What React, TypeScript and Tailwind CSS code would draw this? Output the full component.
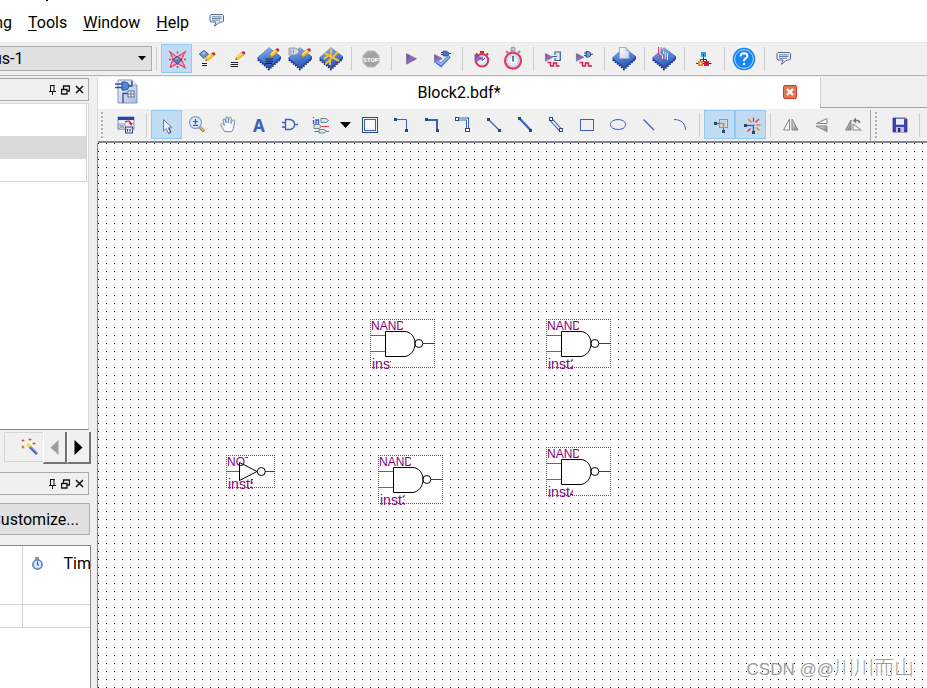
import type { ReactNode } from "react";

const NAVY = "#2f4a66";
const BLUE = "#3a5fc4";

function Icon({ children, shift = 0 }: { children: ReactNode; shift?: number }) {
  return (
    <svg width="25" height="25" viewBox={`0 ${-shift} 25 25`} className="shrink-0 overflow-visible" aria-hidden="true">
      {children}
    </svg>
  );
}

function Tool({ label, active, top, children }: { label: string; active?: boolean; top?: boolean; children: ReactNode }) {
  return (
    <button
      type="button"
      aria-label={label}
      title={label}
      className={`flex h-[29px] w-[31px] shrink-0 items-center justify-center border ${
        active ? "border-[#90c8f6] bg-[#c0dcf3]" : "border-transparent"
      }`}
    >
      <Icon shift={top ? 1 : 0}>{children}</Icon>
    </button>
  );
}

function Sep() {
  return (
    <div className="mt-[3px] flex h-6 w-[9px] shrink-0 justify-center">
      <div className="w-px bg-[#cdcdcd]" />
    </div>
  );
}

function Grip({ className }: { className: string }) {
  return (
    <svg width="3" height="27" className={`mt-px shrink-0 ${className}`} aria-hidden="true">
      {[0, 4, 8, 12, 16, 20, 24].map((y) => (
        <rect key={y} x="0" y={y + 1} width="2" height="2" fill="#b4b4b4" />
      ))}
    </svg>
  );
}

function Defs() {
  return (
    <svg width="0" height="0" className="absolute" aria-hidden="true">
      <defs>
        <linearGradient id="chip" x1="0" y1="0" x2="0.3" y2="1">
          <stop offset="0" stopColor="#9dbdee" />
          <stop offset="0.5" stopColor="#5b87d8" />
          <stop offset="1" stopColor="#2f5dbb" />
        </linearGradient>
        <linearGradient id="play" x1="0" y1="0" x2="1" y2="1">
          <stop offset="0" stopColor="#52538f" />
          <stop offset="0.5" stopColor="#a766c0" />
          <stop offset="1" stopColor="#5a2a84" />
        </linearGradient>
        <linearGradient id="page" x1="0" y1="0" x2="1" y2="1">
          <stop offset="0" stopColor="#ffffff" />
          <stop offset="1" stopColor="#c3d0ee" />
        </linearGradient>
        <linearGradient id="docFill" x1="0" y1="0" x2="1" y2="1">
          <stop offset="0" stopColor="#f4f7fd" />
          <stop offset="1" stopColor="#a9b9e3" />
        </linearGradient>
        <linearGradient id="grayFill" x1="0" y1="0" x2="1" y2="1">
          <stop offset="0" stopColor="#f5f5f5" />
          <stop offset="1" stopColor="#777777" />
        </linearGradient>
        <radialGradient id="dial">
          <stop offset="0" stopColor="#ffffff" />
          <stop offset="1" stopColor="#c5d7f7" />
        </radialGradient>
      </defs>
    </svg>
  );
}

function Chip() {
  return (
    <g>
      <path d="M1 12.8 L12 22.3 L23.5 12" fill="none" stroke="#1d2f5c" strokeWidth="2" strokeDasharray="1.5 1.2" />
      <path d="M0.5 10.5 L12 0.5 L24 9.5 V12 L12 22 L0.5 12.5 Z" fill="#2949a0" />
      <path d="M0.5 10.5 L12 0.5 L24 9.5 L12 20 Z" fill="url(#chip)" />
    </g>
  );
}

function Pencil({ x, y }: { x: number; y: number }) {
  return (
    <g transform={`translate(${x} ${y})`}>
      <path d="M0 8 L1 5 L6 0.5 L8.5 3 L3 7.3 Z" fill="#f6c72b" stroke="#e8a91c" strokeWidth="0.9" />
      <path d="M1.5 5.3 L6.3 1.3" stroke="#fff08a" strokeWidth="1" />
      <path d="M0 8 L0.6 6.5 L1.7 7.4 Z" fill="#3a3226" />
      <path d="M6 0.5 L7.5 -0.6 Q10.3 -0.4 9.7 2 L8.5 3 Z" fill="#c91e4a" />
    </g>
  );
}

function Play({ x, y, s = 1 }: { x: number; y: number; s?: number }) {
  return <path transform={`translate(${x} ${y}) scale(${s})`} d="M0.5 0.5 L10.5 5.5 L0.5 11 Z" fill="url(#play)" stroke="#55608a" strokeWidth="0.6" />;
}

function Bubble() {
  return (
    <g>
      <path d="M6 5.5 H17.5 L18.5 6.5 V12 L17.5 13 H15 L9.5 17.3 L11 13 H6 L5 12 V6.5 Z" fill="#e3edf8" stroke="#526d8f" strokeWidth="1" />
      <path d="M7 7.8 H16.5 M7 9.5 H16.5 M7 11.2 H15" stroke="#526d8f" strokeWidth="0.8" />
    </g>
  );
}

function Node({ x, y }: { x: number; y: number }) {
  return <rect x={x - 1.5} y={y - 1.5} width="3" height="3" fill={NAVY} />;
}

function MainToolbar() {
  return (
    <div className="flex h-[34px] shrink-0 items-start overflow-hidden border-t border-b border-t-[#e9e9e9] border-b-[#b4b4b4] bg-[#f0f0f0] pt-px">
      <div className="relative mt-[2px] h-[25px] w-[152px] shrink-0">
        <select
          aria-label="Revision"
          className="h-[25px] w-full appearance-none border border-l-0 border-[#adadad] bg-[#e1e1e1] indent-[-7px] font-[Roboto,sans-serif] text-base leading-none text-black"
        >
          <option>us-1</option>
        </select>
        <svg width="9" height="5" className="pointer-events-none absolute top-[10px] right-[5px]" aria-hidden="true">
          <path d="M0 0 H8 L4 4.5 Z" fill="#000" />
        </svg>
      </div>
      <Sep />
      <Tool label="Project navigator" active top>
        <path d="M6 5 L13 10 L21 5 L17.5 12.5 L21 20.5 L13.5 16.5 L6 20.5 L9 12.5 Z" fill="#f7a8c0" stroke="#ec3468" strokeWidth="1.3" strokeDasharray="3 0.5" />
        <path d="M13.5 4.5 V6.5 M13.5 19 V21 M5 12.5 H7 M20 12.5 H22" stroke="#d93364" strokeWidth="1.5" />
        <path d="M8.5 12.8 L13 9.5 L18 12.8 L13.3 17.3 Z" fill="#597dae" stroke="#2c3f66" strokeWidth="0.8" />
        <path d="M10.5 12.2 L13 10.5 L15.5 12.2 Z" fill="#adc6e6" />
      </Tool>
      <Tool label="Assignment editor" top>
        <path d="M4.3 7 L9 3.5 L13.5 7 L9 11.5 Z" fill="#6e96cb" stroke="#344b77" strokeWidth="0.9" />
        <path d="M6 7 L9 4.8 L11 6.2 Z" fill="#c5daf2" />
        <Pencil x={10.5} y={5.8} />
        <path d="M7 16.5 H12 M7 18.5 H12" stroke="#222" strokeWidth="1" />
      </Tool>
      <Tool label="Settings" top>
        <Pencil x={9.5} y={4.8} />
        <path d="M5 15.5 H12 M4.5 17.5 H12 M4.5 19.5 H12" stroke="#222" strokeWidth="1.2" />
      </Tool>
      <Tool label="Pin planner" top>
        <Chip />
        <path d="M8.5 12 H16 M8.5 14.2 H16 M8.5 16.4 H15" stroke="#14254f" strokeWidth="1.1" />
        <Pencil x={12.5} y={1.8} />
      </Tool>
      <Tool label="Chip editor" top>
        <Chip />
        <path d="M1 1 H7 Q11 2 11 4.5 Q10.5 7.5 7 8 H1 Z" fill="#d4d9e2" stroke="#7c8796" strokeWidth="0.8" />
        <path d="M3 2.5 V6.5 M5.5 2.5 V6.5" stroke="#8c96a5" />
        <Pencil x={13} y={1.8} />
      </Tool>
      <Tool label="Floorplan" top>
        <Chip />
        <path d="M5.5 6 L20 14 M19 5 L6.5 17 M12 1.5 V9 M5 12 L10 8 M11 18 V12" fill="none" stroke="#f3bf3b" strokeWidth="2" />
      </Tool>
      <Sep />
      <Tool label="Stop" top>
        <path d="M8.5 4 H15.5 L20 8.5 V15.5 L15.5 20 H8.5 L4 15.5 V8.5 Z" fill="#a3a3a3" stroke="#bdbdbd" strokeWidth="1" />
        <text x="12" y="14.5" textAnchor="middle" fill="#fff" className="font-[Roboto,sans-serif] text-[6px] font-bold">STOP</text>
      </Tool>
      <Sep />
      <Tool label="Start compilation" top>
        <Play x={7} y={6.2} />
      </Tool>
      <Tool label="Start analysis" top>
        <Play x={4} y={7} s={0.8} />
        <path d="M6.5 14.5 L11 18 L19.5 9" fill="none" stroke="#3f6fc8" strokeWidth="3.6" />
        <path d="M6.7 14.3 L11 17.5 L19 9.3" fill="none" stroke="#85b8f4" strokeWidth="1.9" />
        <path d="M13 4 H16 Q19 5 19.5 6.5 Q19 8.5 16 9 H13 Z" fill="#5272b8" stroke="#304778" strokeWidth="0.7" />
        <path d="M11 5.5 H13 M11 7.5 H13 M19 6.5 H21" stroke="#304778" />
      </Tool>
      <Sep />
      <Tool label="Timing analyzer" top>
        <rect x="10" y="4" width="4" height="2.5" fill="#b82649" />
        <path d="M6 6.5 L7.5 8 M18 6.5 L16.5 8" stroke="#b82649" strokeWidth="2" />
        <circle cx="12" cy="13.3" r="6.2" fill="url(#dial)" stroke="#df3159" strokeWidth="2" />
        <path d="M12 13.5 V9.5 M12 13.5 L15 11" stroke="#34406d" />
        <Play x={4.5} y={7} s={0.75} />
      </Tool>
      <Tool label="Stopwatch" top>
        <path d="M10 1 Q12 -1 14 1 V4 H10 Z" fill="#c5c5c5" stroke="#888" strokeWidth="0.8" />
        <path d="M5 4 L7 6 M19 4 L17 6" stroke="#999" strokeWidth="2.4" />
        <circle cx="12" cy="13.7" r="8" fill="url(#dial)" stroke="#e13b60" strokeWidth="2.2" />
        <circle cx="12" cy="13.7" r="5.5" fill="none" stroke="#8fa6d4" strokeWidth="1" strokeDasharray="0.8 2" />
        <path d="M12 9 V14.5" stroke="#25335e" strokeWidth="1.3" />
      </Tool>
      <Sep />
      <Tool label="RTL simulation" top>
        <Play x={4} y={6} s={0.75} />
        <path d="M14.5 5.5 H19 V13.5 H14.5 Z" fill="#dbe8f4" />
        <path d="M11.5 9.5 H16 M14 8 V5 H19.3 V13.5 H14 V11" fill="none" stroke="#3d5f82" strokeWidth="1.2" />
        <path d="M6.5 15.5 H9.5 V19 H12.5 V16 H15.5 V19 H18.5" fill="none" stroke="#cc204c" strokeWidth="1.5" />
      </Tool>
      <Tool label="Gate level simulation" top>
        <Play x={4} y={6} s={0.75} />
        <path d="M14 4.5 H16.5 Q19 5.5 19 7.3 Q18.5 9.7 16.5 10 H14 Z" fill="#6e95da" stroke="#2f4f91" />
        <path d="M12 6 H14 M12 8.5 H14 M19 7.3 H21" stroke="#2f4f91" />
        <path d="M7.5 15.5 H10.5 V19 H13.5 V16 H16.5 V19 H20" fill="none" stroke="#cc204c" strokeWidth="1.5" />
      </Tool>
      <Sep />
      <Tool label="Chip document" top>
        <Chip />
        <path d="M7.5 0.5 H14 L17 3.5 V11.5 H7.5 Z" fill="url(#page)" stroke="#8ea4cc" strokeWidth="0.8" />
        <path d="M14 0.5 V3.5 H17" fill="none" stroke="#8ea4cc" strokeWidth="0.8" />
      </Tool>
      <Sep />
      <Tool label="Programmer" top>
        <Chip />
        <path d="M6.5 0 V7 L9 9 V12 M9 0 V6 L12 8 V13" fill="none" stroke="#d8405e" strokeWidth="1" />
        <path d="M7.8 0 V6.5 L10.5 8.5 V12 M11.5 4 V7 M13.3 5 V12 M15.5 6 V13" fill="none" stroke="#e3ebfa" strokeWidth="1" />
      </Tool>
      <Sep />
      <Tool label="Platform designer" top>
        <path d="M11.5 9 V15 M11.5 12.5 H8.5 V15 M11.5 12.5 H14.5 V15 M4 16.5 H19.5" fill="none" stroke="#333" strokeWidth="1" />
        <rect x="9" y="5" width="5" height="5" fill="#2aa0e8" />
        <rect x="11" y="7" width="1" height="2" fill="#15537f" />
        <rect x="6" y="14" width="5" height="5" fill="#f2812d" />
        <path d="M7.5 16.5 H9.5 M8.5 15.5 V17.5" stroke="#fff1c5" />
        <rect x="12" y="14" width="5" height="5" fill="#e3173d" />
        <path d="M14.5 15.2 V16.8" stroke="#860a22" />
      </Tool>
      <Sep />
      <Tool label="Help" top>
        <circle cx="12" cy="12" r="11.3" fill="#1685f5" />
        <circle cx="12" cy="12" r="9.3" fill="none" stroke="#b9dafb" strokeWidth="1" />
        <path d="M8.5 9.5 Q8.7 6.2 12 6.2 Q15.5 6.4 15.4 9 Q15.3 10.8 13.4 11.6 Q12 12.3 12 14.2" fill="none" stroke="#fff" strokeWidth="2" />
        <circle cx="12" cy="17" r="1.3" fill="#fff" />
      </Tool>
      <Sep />
      <Tool label="Feedback" top>
        <Bubble />
      </Tool>
    </div>
  );
}

function DrawToolbar() {
  return (
    <div className="flex h-[34px] shrink-0 items-start overflow-hidden border-b-2 border-[#84868c] bg-[#f0f0f0] pt-px">
      <Grip className="mr-[7px] ml-[3px]" />
      <Tool label="Detach window">
        <rect x="4" y="5" width="16" height="12" fill="#e8edf8" stroke="#2d4ea6" strokeWidth="0.6" />
        <rect x="4" y="5" width="16" height="3" fill="#2447a6" />
        <path d="M11 10 Q16 7.5 17 12" fill="none" stroke="#d81e48" strokeWidth="1.4" />
        <path d="M14.8 11 H19.2 L17 13.8 Z" fill="#d81e48" />
        <rect x="5" y="12" width="6" height="5" fill="#fff" stroke="#7883a0" strokeWidth="0.8" />
        <path d="M7 13 V16 M9 13 V16" stroke="#555" />
        <rect x="11.5" y="15" width="7" height="6" fill="#dbe5f8" stroke="#374979" strokeWidth="1" />
        <path d="M13.5 17 V19.5 M16 17 V19.5" stroke="#26355e" />
      </Tool>
      <Sep />
      <Tool label="Selection tool" active>
        <path d="M9.5 7.5 V19 L12.3 16.6 L14.2 21 L16.4 20 L14.4 15.8 H18 Z" fill="#eef3ff" stroke="#6e7c9d" strokeWidth="1" />
        <path d="M15 16 L17 20.3 L14.5 21.8" fill="none" stroke="#3f4f7c" />
      </Tool>
      <Tool label="Zoom tool">
        <path d="M14.5 14.8 L19 19.5" stroke="#9a7448" strokeWidth="3" />
        <path d="M14.8 14.8 L18.6 18.8" stroke="#e9bd83" strokeWidth="1.3" />
        <circle cx="10.5" cy="10.5" r="5.9" fill="#dcebfc" stroke="#86a3cd" strokeWidth="1.3" />
        <path d="M10.5 7 V12 M8 9.5 H13 M8 13.3 H13" stroke="#2c5cc0" strokeWidth="1.2" />
      </Tool>
      <Tool label="Hand tool">
        <path d="M8.5 19.5 C7.5 17 5 14.5 4.7 12.5 C5.5 11 7.5 12 8.5 13.5 L7 8 C7 6.2 9 6.3 9.3 8 L10 11 L10 6 C10 4.4 12.3 4.3 12.3 6 V11 L13.2 6.2 C13.6 4.7 15.7 5.2 15.4 6.9 L15 11.5 L16.6 8.5 C17.5 7.4 19.2 8 18.7 9.7 L17.6 15 C17.2 17.5 16.5 18.4 15.7 19.7 Z" fill="#f7f9ff" stroke="#6f86b3" strokeWidth="1" />
      </Tool>
      <Tool label="Text tool">
        <text x="12" y="20" textAnchor="middle" fill={BLUE} className="font-['Noto_Sans',sans-serif] text-[17px] font-bold">A</text>
      </Tool>
      <Tool label="Symbol tool">
        <path d="M7.5 7.5 H12 C15 8 16.5 10 16.5 12.5 C16.5 15 15 17 12 17.5 H7.5 Z M4 10.5 H7.5 M4 15 H7.5 M16.5 12.5 H20" fill="none" stroke={BLUE} strokeWidth="1.3" />
      </Tool>
      <Tool label="Pin tool">
        <path d="M4.5 5 V6 M4.5 8 V12 M7 12 V8 H9.5 V12" fill="none" stroke={BLUE} strokeWidth="1.4" />
        <path d="M12 6.5 H17 L19.5 8.5 L17 10.5 H12 Z M5 12.5 H10 L12.5 14.5 L10 16.5 H5 Z M10 17.5 H15 L17.5 19.2 L15 21 H10 Z" fill="#dce7ec" stroke="#607882" strokeWidth="0.9" />
        <path d="M12.5 14.5 H20 M5.5 19.5 H10 M17.5 19.5 H20" stroke="#e63b47" strokeWidth="1.2" />
      </Tool>
      <button type="button" aria-label="Pin type" className="flex h-[29px] w-[17px] shrink-0 items-center justify-center">
        <svg width="11" height="6" aria-hidden="true"><path d="M0 0 H11 L5.5 6 Z" fill="#000" /></svg>
      </button>
      <Tool label="Block tool">
        <rect x="5.5" y="5.5" width="15" height="15" fill="none" stroke={NAVY} />
        <rect x="7.5" y="7.5" width="11" height="11" fill="#f7f9fd" stroke={BLUE} />
      </Tool>
      <Tool label="Orthogonal node">
        <path d="M7.5 7.5 H18.5 V18.5" fill="none" stroke={BLUE} /><Node x={7.5} y={7.5} /><Node x={18.5} y={18.5} />
      </Tool>
      <Tool label="Orthogonal bus">
        <path d="M7.5 8 H18 V18.5" fill="none" stroke={BLUE} strokeWidth="2" /><Node x={7.5} y={7.5} /><Node x={18.5} y={18.5} />
      </Tool>
      <Tool label="Orthogonal conduit">
        <path d="M7.5 7 H17.5 V18.5" fill="none" stroke={BLUE} strokeWidth="3" />
        <path d="M7.5 7 H17.5 V18.5" fill="none" stroke="#fff" strokeWidth="1" />
        <rect x="5.5" y="5.5" width="3" height="3" fill="#fff" stroke={NAVY} />
        <rect x="15.5" y="16.5" width="4" height="3" fill="#fff" stroke={NAVY} />
      </Tool>
      <Tool label="Diagonal node">
        <path d="M7.5 7.5 L18.5 18.5" stroke={BLUE} strokeWidth="1.2" /><Node x={7.5} y={7.5} /><Node x={18.5} y={18.5} />
      </Tool>
      <Tool label="Diagonal bus">
        <path d="M7.5 6.5 L18.5 18" stroke={BLUE} strokeWidth="2.2" /><Node x={7.5} y={6.5} /><Node x={18.5} y={18.5} />
      </Tool>
      <Tool label="Diagonal conduit">
        <path d="M8 7.5 L18 18.5" stroke={BLUE} strokeWidth="3.8" />
        <path d="M8 7.5 L18 18.5" stroke="#f5f8ff" strokeWidth="1.8" />
        <rect x="6.5" y="5.5" width="3" height="3" fill="#fff" stroke={NAVY} />
        <rect x="16.5" y="16.5" width="3" height="3" fill="#fff" stroke={NAVY} />
      </Tool>
      <Tool label="Rectangle tool">
        <rect x="6.5" y="7.5" width="13" height="11" fill="none" stroke={BLUE} />
      </Tool>
      <Tool label="Oval tool">
        <ellipse cx="13" cy="12.5" rx="7.7" ry="5" fill="none" stroke={BLUE} />
      </Tool>
      <Tool label="Line tool"><path d="M7.5 7.5 L18 18" stroke={BLUE} strokeWidth="1.3" /></Tool>
      <Tool label="Arc tool"><path d="M7 7.5 C14 7.5 18.5 11.5 18.5 18" fill="none" stroke={BLUE} /></Tool>
      <Sep />
      <Tool label="Partial line selection" active>
        <rect x="12.5" y="7.5" width="8" height="8" fill="none" stroke="#a3287e" strokeWidth="1" strokeDasharray="1 1" />
        <path d="M8.5 11.5 H12" stroke={BLUE} strokeWidth="1.3" />
        <path d="M12 11.5 H16.5 V16" fill="none" stroke="#f08427" strokeWidth="1.6" />
        <path d="M16.5 16 V19" stroke={BLUE} /><Node x={8.5} y={11.5} /><Node x={16.5} y={19.5} />
      </Tool>
      <Tool label="Rubberbanding" active>
        <path d="M7.5 13.5 H15.5 V20.5" fill="none" stroke={BLUE} strokeWidth="1.4" />
        <path d="M10 7 L13.5 10.5 M18.5 15.5 L21.5 18.5 M18 13 H22.5" stroke="#f08427" strokeWidth="1.5" />
        <path d="M15.5 5.5 V10 M21 7 L17.5 10.5 M9.5 19.5 L12.5 16.5" stroke="#df3851" strokeWidth="1.4" />
        <Node x={7.5} y={13.5} /><Node x={15.5} y={20.5} />
      </Tool>
      <Sep />
      <Tool label="Flip horizontal">
        <path d="M5.5 18 L11.5 7 V18 Z" fill="#fafafa" stroke="#858585" />
        <path d="M14 18 V7 L20 18 Z" fill="url(#grayFill)" stroke="#858585" />
      </Tool>
      <Tool label="Flip vertical">
        <path d="M7.5 11.5 L18 6.5 V11.5 Z" fill="#fafafa" stroke="#858585" />
        <path d="M7 14 H18 V19.5 Z" fill="url(#grayFill)" stroke="#858585" />
      </Tool>
      <Tool label="Rotate left">
        <path d="M5.5 18 L11 8 V18 Z" fill="url(#grayFill)" stroke="#858585" />
        <path d="M13 18 V12 L21 18 Z" fill="#fafafa" stroke="#858585" />
        <path d="M14.5 8.5 H17 Q19.5 8.5 19.5 11" fill="none" stroke="#777" strokeWidth="1.6" />
        <path d="M16 5.5 V11.5 L12.8 8.5 Z" fill="#777" />
      </Tool>
      <div className="ml-[2px] h-8 w-px shrink-0 bg-[#a8a8a8]" />
      <Grip className="mr-[6px] ml-1" />
      <Tool label="Save">
        <path d="M6 6 H19 L20 7 V20 H6 Z" fill="#3f44b5" stroke="#262c80" strokeWidth="0.7" />
        <rect x="9" y="6.7" width="8" height="6" fill="#e5efff" />
        <path d="M17.5 6.5 H19.5" stroke="#ff8d4e" strokeWidth="1.3" />
        <rect x="9" y="15" width="8" height="5" fill="#b9c5e8" />
        <rect x="11" y="16" width="2.3" height="4" fill="#252b6e" />
      </Tool>
      <Sep />
    </div>
  );
}

function DockTitle() {
  return (
    <div className="mr-2 flex h-[23px] shrink-0 items-center justify-end gap-[2px] border border-l-0 border-[#a8a8a8] pr-[3px]">
      <button type="button" aria-label="Pin" className="flex h-[13px] w-[11px] items-center justify-center">
        <svg width="9" height="12" aria-hidden="true"><path d="M2.5 1 V7 M6 1 V7 M2.5 1.5 H6.5 M1 7.5 H8 M4.5 7.5 V11" fill="none" stroke="#111" /></svg>
      </button>
      <button type="button" aria-label="Float" className="flex h-[13px] w-[11px] items-center justify-center">
        <svg width="9" height="10" aria-hidden="true"><path d="M2.5 4 V1 H8.5 V6 H6 M0.5 9.5 V4.5 H6 V9 H0.5" fill="none" stroke="#111" strokeWidth="1.3" /></svg>
      </button>
      <button type="button" aria-label="Close panel" className="flex h-[13px] w-[12px] items-center justify-center">
        <svg width="9" height="9" aria-hidden="true"><path d="M1 1 L8 8 M8 1 L1 8" stroke="#111" strokeWidth="1.5" /></svg>
      </button>
    </div>
  );
}

function LeftDock() {
  return (
    <aside className="flex w-[97px] shrink-0 flex-col overflow-hidden bg-[#f0f0f0] pt-[2px]">
      <DockTitle />
      <div className="mt-[2px] mr-2 h-[327px] shrink-0 border-t border-r border-b border-[#d9d9d9] border-b-[#84868c] bg-white">
        <div className="mr-px border-r border-b border-[#d3d3d3]">
          <div className="h-8" />
          <div className="h-[23px] bg-[#d9d9d9]" />
          <div className="h-[22px]" />
        </div>
      </div>
      <div className="mt-[2px] mr-[6px] flex h-8 shrink-0 justify-end">
        <button type="button" aria-label="Tasks" className="mb-[2px] flex w-[39px] items-center justify-center border border-r-0 border-[#d6d6d6] pl-3">
          <svg width="18" height="18" aria-hidden="true">
            <path d="M8 8 L16 16" stroke="#3d61c0" strokeWidth="2.6" />
            <path d="M9 8.4 L16 15" stroke="#a5bdf1" strokeWidth="0.8" />
            <path d="M6 6 L9 9" stroke="#f0dc3c" strokeWidth="3" />
            <path d="M2 1 V4 M0.5 2.5 H3.5 M9 0 V3 M7.5 1.5 H10.5 M2 7.5 V10.5 M0.5 9 H3.5 M13 4 V7 M11.5 5.5 H14.5" stroke="#df7e23" />
            <path d="M1.5 2.5 H2.5 M8.5 1.5 H9.5 M1.5 9 H2.5 M12.5 5.5 H13.5" stroke="#bd1e1e" />
          </svg>
        </button>
        {[true, false].map((left) => (
          <button
            key={String(left)}
            type="button"
            aria-label={left ? "Previous tab" : "Next tab"}
            className="flex w-6 items-center justify-center border-r-2 border-b-2 border-l border-[#737373] border-l-white bg-[#f0f0f0]"
          >
            <svg width="9" height="15" aria-hidden="true">
              <path d={left ? "M8.5 0 V15 L0.5 7.5 Z" : "M0.5 0 V15 L8.5 7.5 Z"} fill={left ? "#9d9d9d" : "#000"} />
            </svg>
          </button>
        ))}
      </div>
      <div className="mt-2 flex flex-col"><DockTitle /></div>
      <button type="button" className="mt-2 mr-[7px] flex h-8 shrink-0 items-center justify-end border border-l-0 border-[#adadad] bg-[#e1e1e1] pt-px pr-[10px] whitespace-nowrap">
        Customize...
      </button>
      <div className="mt-[10px] mr-[6px] grow overflow-hidden border-t border-r border-[#84868c] bg-white">
        <table className="w-full table-fixed border-collapse">
          <thead>
            <tr className="h-[58px] border-b border-[#d3d3d3] align-top">
              <th className="w-[22px] border-r border-[#d3d3d3]" aria-label="Task" />
              <th className="overflow-hidden font-normal">
                <div className="flex items-center gap-5 overflow-hidden pt-[6px] pl-2">
                  <svg width="13" height="24" className="shrink-0" aria-hidden="true">
                    <rect x="4" y="5" width="4" height="3" fill="#8798b5" />
                    <circle cx="6.5" cy="12.5" r="4.6" fill="#d8e6fb" stroke="#6286c1" strokeWidth="1.7" />
                    <path d="M6.5 9.5 V13 H8" fill="none" stroke="#2e508f" />
                  </svg>
                  <span className="leading-6">Time</span>
                </div>
              </th>
            </tr>
          </thead>
          <tbody>
            <tr className="h-[23px] border-b border-[#d3d3d3]">
              <td className="border-r border-[#d3d3d3]" />
              <td />
            </tr>
          </tbody>
        </table>
      </div>
    </aside>
  );
}

function TabBar() {
  return (
    <div className="flex h-8 shrink-0">
      <div className="flex grow items-center bg-white pr-[23px] pl-[17px]">
        <svg width="24" height="25" className="mb-1 shrink-0" aria-hidden="true">
          <path d="M3 1 H17 L22 6 V24 H3 Z" fill="url(#docFill)" stroke="#8095c4" />
          <path d="M17 1 V6 H22" fill="#fff" stroke="#8095c4" />
          <path d="M7 3 H10 C13 3.5 14 5 14 7 C14 9 13 10.5 10 11 H7 Z" fill="#5488e1" stroke="#274b95" />
          <path d="M0 5 H7 M0 8.5 H7 M14 7 H17 V2 M8 24 V14.5 H13" fill="none" stroke="#385080" strokeWidth="1.3" />
          <rect x="13" y="12" width="6" height="6" fill="#fff" stroke="#5e6e90" />
          <path d="M16 12 V18 M13 15 H19" stroke="#5e6e90" />
        </svg>
        <span className="grow pr-1 text-center">Block2.bdf*</span>
        <button type="button" aria-label="Close tab" className="mb-[2px] flex size-[14px] items-center justify-center rounded-[2px] border border-[#cf3b28] bg-[#e2764f]">
          <svg width="8" height="8" aria-hidden="true"><path d="M1 1 L7 7 M7 1 L1 7" stroke="#fff" strokeWidth="2.2" /></svg>
        </button>
      </div>
      <div className="mb-px w-[107px] shrink-0 border-b border-l border-[#a0a0a0] border-l-[#d0d0d0] bg-[#f0f0f0]" />
    </div>
  );
}

function Frame({ w, h }: { w: number; h: number }) {
  return (
    <g>
      <rect width={w} height={h} fill="#fff" />
      <path
        d={`M0 0.5 H${w} M0 ${h - 0.5} H${w} M0.5 0 V${h} M${w - 0.5} 0 V${h}`}
        fill="none"
        stroke="#008080"
        strokeDasharray="1 1"
      />
    </g>
  );
}

const label = "absolute overflow-hidden whitespace-nowrap text-[#800080] font-['Liberation_Sans',Arial,sans-serif]";

function Nand({ place, inst, short }: { place: string; inst: string; short?: boolean }) {
  return (
    <div className={`absolute h-[49px] w-[65px] ${place}`}>
      <svg width="65" height="49" className="absolute inset-0" aria-hidden="true">
        <Frame w={65} h={49} />
        <path d="M1 16.5 H15 M1 32.5 H15" stroke="#0080ff" />
        <path d="M53 24.5 H65" stroke="#8000ff" />
        <path d="M15.5 12.5 H35 C41 13 45 18 45 24.5 C45 31 41 36.5 35 37.5 H15.5 Z" fill="none" stroke="#000" />
        <circle cx="48.8" cy="24.5" r="4" fill="none" stroke="#000" />
      </svg>
      <span className={`${label} top-[1px] left-px h-[11px] w-[32px] text-[12px] leading-[12px]`}>NAND2</span>
      <span className={`${label} top-[38px] left-[2px] h-[14px] text-[14px] leading-[14px] ${short ? "w-[19px]" : "w-[25px]"}`}>{inst}</span>
    </div>
  );
}

function Not() {
  return (
    <div className="absolute top-[312px] left-[128px] h-[33px] w-[49px]">
      <svg width="49" height="33" className="absolute inset-0" aria-hidden="true">
        <Frame w={49} h={33} />
      </svg>
      <span className={`${label} top-[1px] left-px h-[11px] w-[21px] text-[12px] leading-[12px]`}>NOT</span>
      <span className={`${label} top-[22px] left-[2px] h-[14px] w-[25px] text-[14px] leading-[14px]`}>inst5</span>
      <svg width="49" height="33" className="absolute inset-0" aria-hidden="true">
        <path d="M1 16.5 H13" stroke="#0080ff" />
        <path d="M39 16.5 H49" stroke="#8000ff" />
        <path d="M13.5 7.5 V25.5 L31 16.5 Z" fill="none" stroke="#000" />
        <circle cx="35.3" cy="16.5" r="4" fill="none" stroke="#000" />
      </svg>
    </div>
  );
}

function Canvas() {
  return (
    <div className="relative grow overflow-hidden bg-white">
      <svg className="absolute inset-0 h-full w-full" aria-hidden="true">
        <defs>
          <pattern id="grid" width="8" height="8" patternUnits="userSpaceOnUse">
            <rect width="1" height="1" fill="#000" />
          </pattern>
        </defs>
        <rect width="100%" height="100%" fill="url(#grid)" />
      </svg>
      <div className="absolute inset-y-0 left-[-1px] w-px bg-[#84868c]" />
      <Nand place="left-[272px] top-[176px]" inst="inst" short />
      <Nand place="left-[448px] top-[176px]" inst="inst2" />
      <Nand place="left-[280px] top-[312px]" inst="inst3" />
      <Nand place="left-[448px] top-[304px]" inst="inst4" />
      <Not />
      <span className="absolute right-[13px] bottom-[6px] font-['Liberation_Sans',sans-serif] text-[17px] leading-6 whitespace-nowrap text-[#9c9c9c] [text-shadow:1px_1px_0_#fff]">
        CSDN @@
        <span className="font-['Noto_Sans_CJK_SC',sans-serif] text-[20px] font-light">川川而山</span>
      </span>
    </div>
  );
}

export default function App() {
  return (
    <div className="flex h-screen flex-col overflow-hidden bg-[#f0f0f0] font-[Roboto,sans-serif] text-base text-black">
      <Defs />
      <nav className="relative flex h-[42px] shrink-0 items-center bg-white pt-1">
        <div className="absolute top-0 left-[46px] h-px w-[2px] bg-black" />
        <button type="button" className="flex w-3 justify-end overflow-hidden"><span>Processing</span></button>
        <button type="button" className="ml-4"><u className="underline-offset-2">T</u>ools</button>
        <button type="button" className="ml-4"><u className="underline-offset-2">W</u>indow</button>
        <button type="button" className="ml-4"><u className="underline-offset-2">H</u>elp</button>
        <button type="button" aria-label="Send feedback" className="mb-1 ml-4"><Icon><Bubble /></Icon></button>
      </nav>
      <MainToolbar />
      <div className="flex min-h-0 grow">
        <LeftDock />
        <main className="flex min-w-0 grow flex-col pt-px">
          <div className="flex flex-col border-l border-[#dcdcdc]">
            <TabBar />
            <DrawToolbar />
          </div>
          <div className="flex grow border-l border-[#84868c]">
            <Canvas />
          </div>
        </main>
      </div>
    </div>
  );
}
